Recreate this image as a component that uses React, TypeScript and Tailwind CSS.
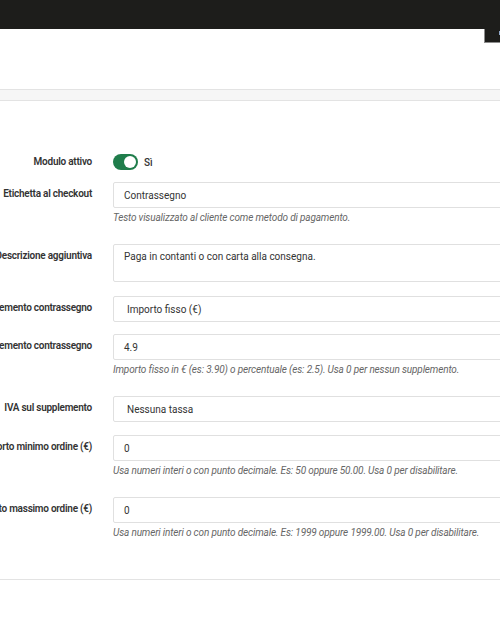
import React from "react";

const font = { fontFamily: 'Roboto, "Noto Sans", sans-serif' };

function Label({ children }: { children: React.ReactNode }) {
    return (
        <div className="w-[92px] shrink-0 flex justify-end pt-[4px]">
            <span className="whitespace-nowrap text-[10px] leading-[16px] font-semibold tracking-[-0.25px] text-[#333333]">{children}</span>
        </div>
    );
}

function Help({ children, last }: { children: React.ReactNode; last?: boolean }) {
    return (
        <p className={`mt-[3px] whitespace-nowrap text-[10px] leading-[14px] italic tracking-[-0.15px] text-[#666666] ${last ? "" : "pb-[6px]"}`}>
            {children}
        </p>
    );
}

function Row({ label, help, children, className = "mb-[13px]" }: { label: string; help?: string; children: React.ReactNode; className?: string }) {
    return (
        <div className={`flex gap-[21px] ${className}`}>
            <Label>{label}</Label>
            <div className="w-[420px] shrink-0">
                {children}
                {help && <Help last={className === ""}>{help}</Help>}
            </div>
        </div>
    );
}

function TextBox({ value, select }: { value: string; select?: boolean }) {
    return (
        <div className={`h-[26px] flex items-center border border-[#e0e0e0] rounded-[2px] bg-white text-[10px] text-[#333333] ${select ? "pl-[13px]" : "pl-[10px]"}`}>
            {value}
        </div>
    );
}

export default function App() {
    return (
        <div className="relative w-[500px] h-[625px] overflow-hidden bg-white" style={font}>
            {/* top bar */}
            <div className="h-[29px] bg-[#1d1d1b]" />
            <div className="absolute top-[29px] right-0 w-[16px] h-[14px] bg-[#1d1d1b] border-l border-b border-[#8c8c8c]">
                <div className="absolute top-[2px] right-0 w-[1px] h-[4px] bg-[#8fa6c8]" />
            </div>

            <div className="h-[60px]" />
            <div className="h-[12px] bg-[#f6f6f6] border-y border-[#e3e3e3]" />

            <div className="pt-[53px] pb-[39px] border-b border-[#e3e3e3]">
                {/* Modulo attivo */}
                <div className="flex gap-[21px] mb-[12px] items-center h-[16px]">
                    <div className="w-[92px] shrink-0 flex justify-end">
                        <span className="whitespace-nowrap text-[10px] leading-[16px] font-semibold tracking-[-0.25px] text-[#333333]">Modulo attivo</span>
                    </div>
                    <div className="flex items-center gap-[6px]">
                        <div className="w-[25px] h-[16px] rounded-full bg-[#1f7d4b] flex items-center justify-end pr-[2px]">
                            <div className="w-[12px] h-[12px] rounded-full bg-white" />
                        </div>
                        <span className="text-[10px] font-medium text-[#333333]">Sì</span>
                    </div>
                </div>

                <Row label="Etichetta al checkout" help="Testo visualizzato al cliente come metodo di pagamento.">
                    <TextBox value="Contrassegno" />
                </Row>

                <Row label="Descrizione aggiuntiva" className="mb-[14px]">
                    <div className="h-[38px] border border-[#e0e0e0] rounded-[2px] pl-[10px] pt-[4px] text-[10px] leading-[16px] text-[#333333]">
                        Paga in contanti o con carta alla consegna.
                    </div>
                </Row>

                <Row label="Tipo supplemento contrassegno" className="mb-[12px]">
                    <TextBox value="Importo fisso (€)" select />
                </Row>

                <Row
                    label="Importo supplemento contrassegno"
                    help="Importo fisso in € (es: 3.90) o percentuale (es: 2.5). Usa 0 per nessun supplemento."
                >
                    <TextBox value="4.9" />
                </Row>

                <Row label="IVA sul supplemento">
                    <TextBox value="Nessuna tassa" select />
                </Row>

                <Row
                    label="Importo minimo ordine (€)"
                    help="Usa numeri interi o con punto decimale. Es: 50 oppure 50.00. Usa 0 per disabilitare."
                >
                    <TextBox value="0" />
                </Row>

                <Row
                    label="Importo massimo ordine (€)"
                    help="Usa numeri interi o con punto decimale. Es: 1999 oppure 1999.00. Usa 0 per disabilitare."
                    className=""
                >
                    <TextBox value="0" />
                </Row>
            </div>
        </div>
    );
}
